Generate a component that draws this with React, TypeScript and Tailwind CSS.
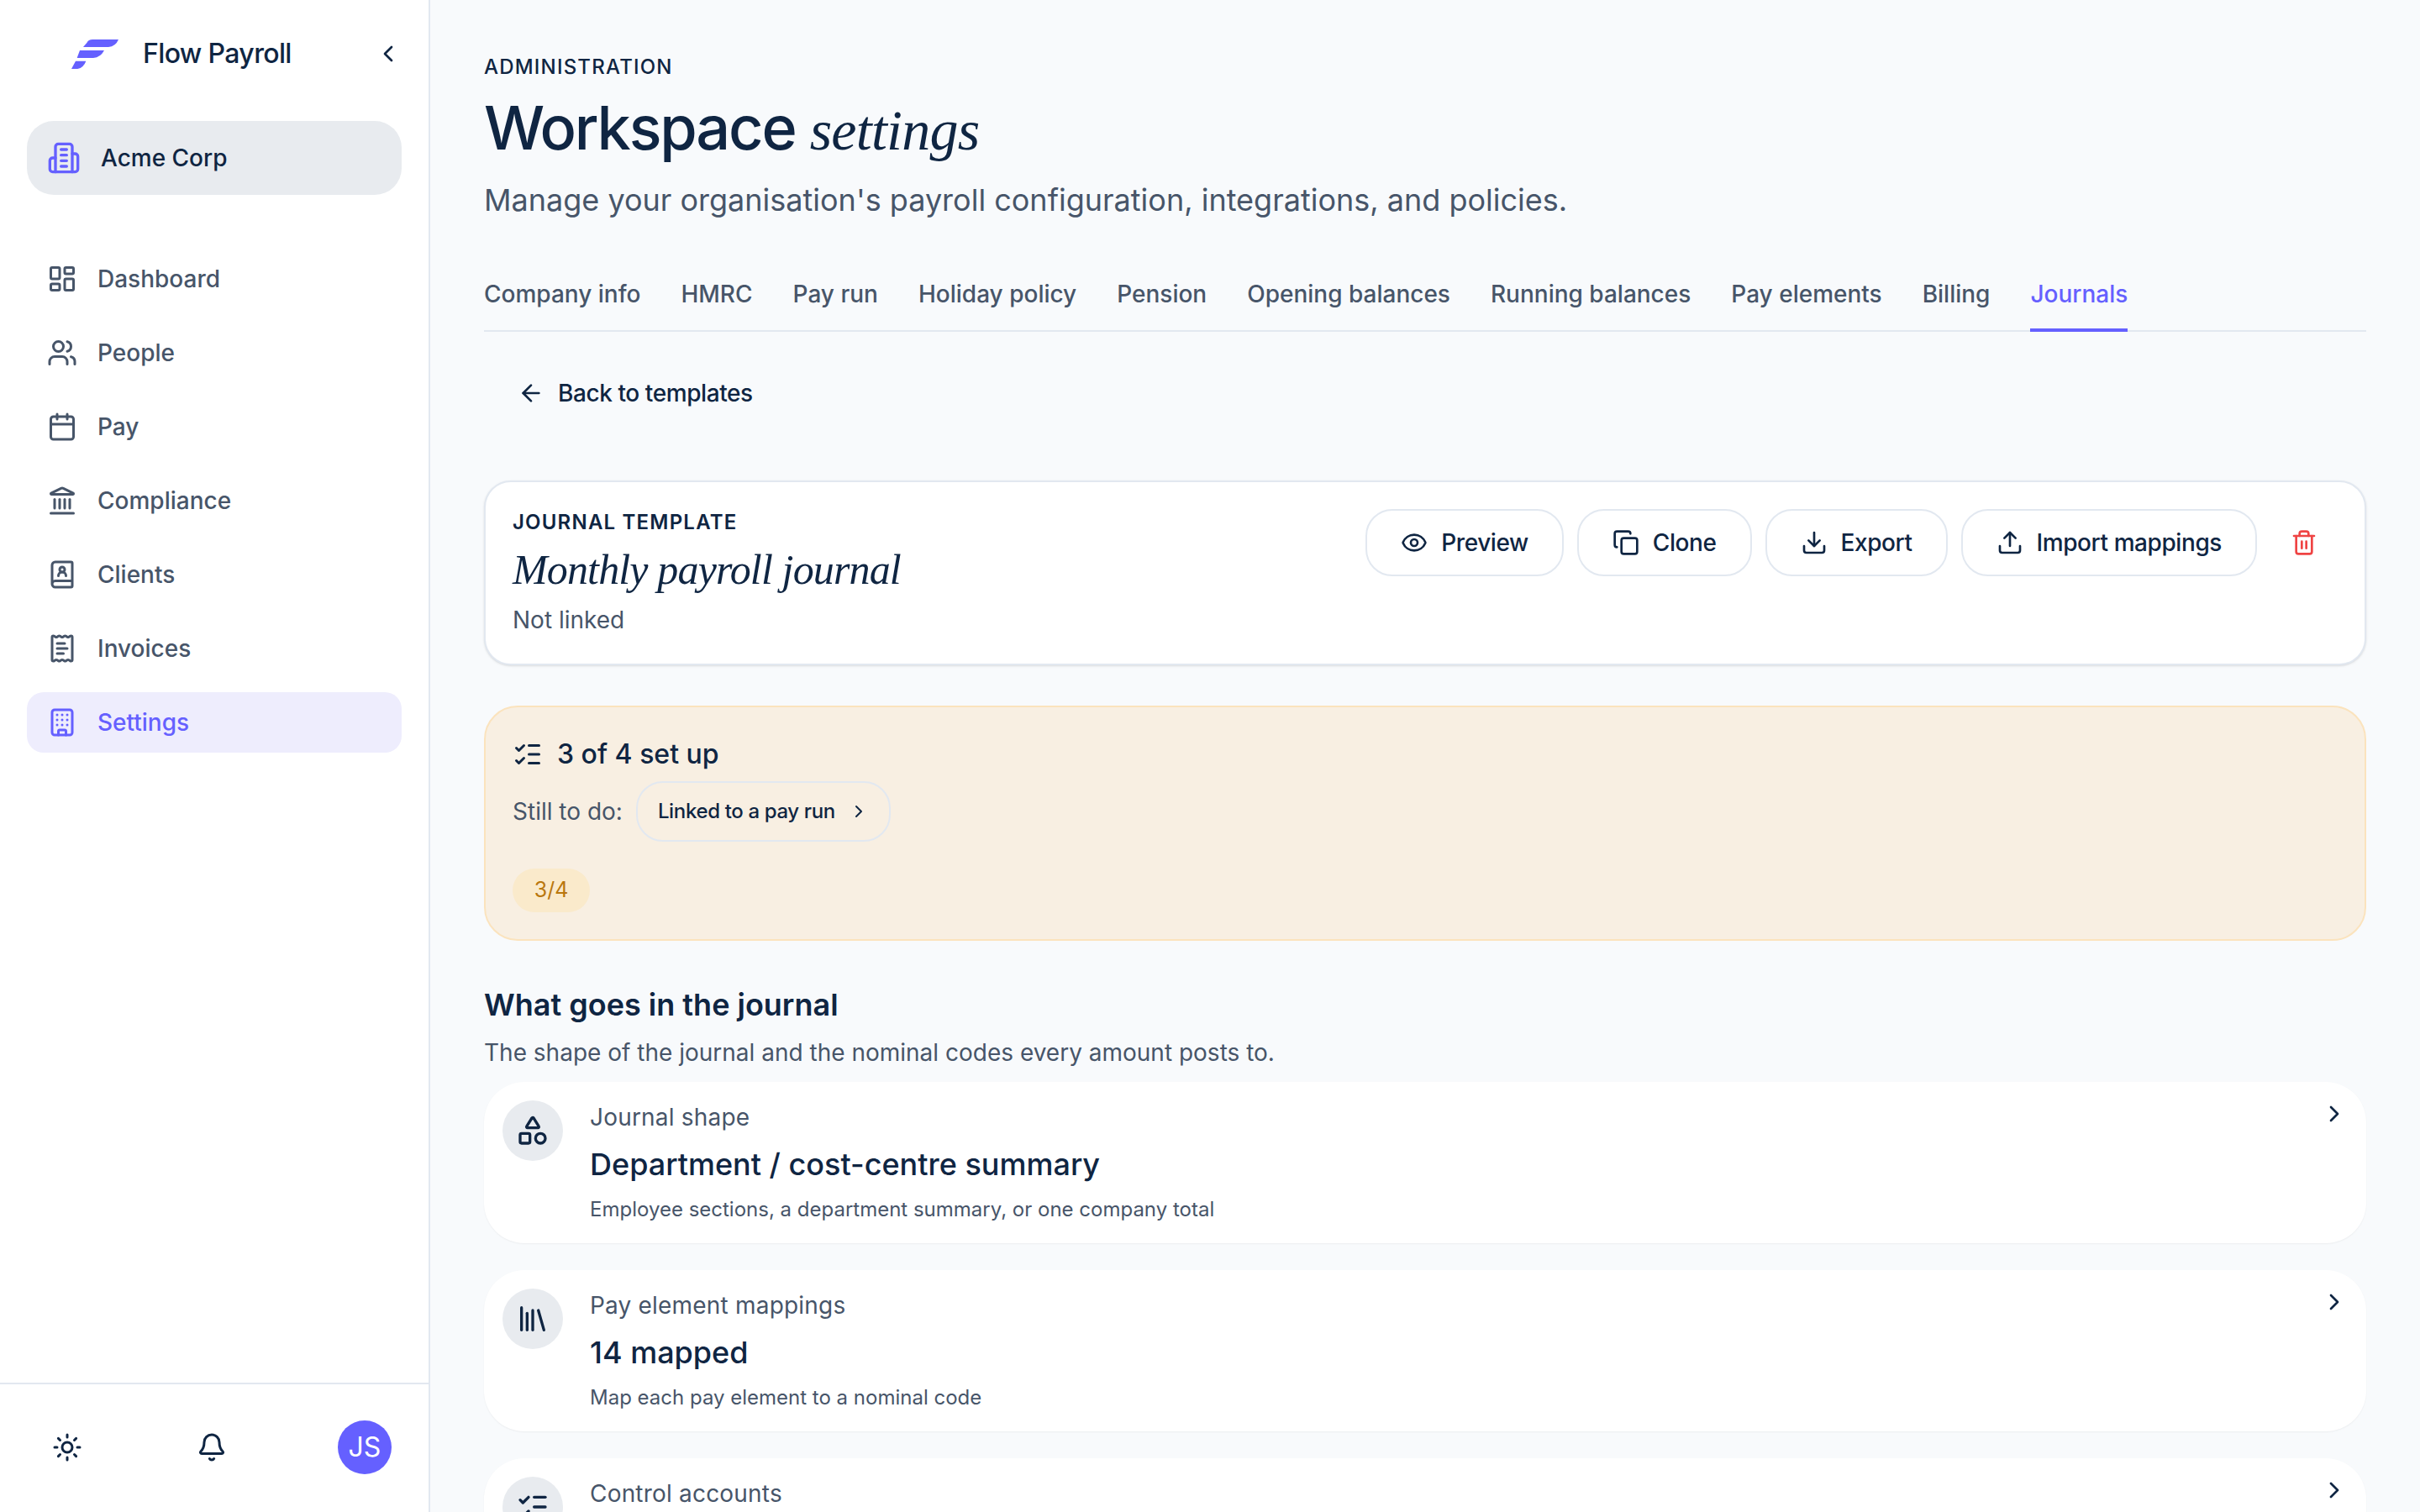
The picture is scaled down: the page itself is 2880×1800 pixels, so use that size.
import React from 'react';
import {
  ArrowLeft,
  Bell,
  BookUser,
  Building,
  Calendar,
  ChevronLeft,
  ChevronRight,
  Copy,
  Download,
  Eye,
  Landmark,
  LayoutDashboard,
  Library,
  ListChecks,
  ReceiptText,
  Shapes,
  Sun,
  Trash2,
  Upload,
  Users,
} from 'lucide-react';

const navItems = [
  { label: 'Dashboard', icon: LayoutDashboard },
  { label: 'People', icon: Users },
  { label: 'Pay', icon: Calendar },
  { label: 'Compliance', icon: Landmark },
  { label: 'Clients', icon: BookUser },
  { label: 'Invoices', icon: ReceiptText },
  { label: 'Settings', icon: Building, active: true },
];

const tabs = [
  'Company info',
  'HMRC',
  'Pay run',
  'Holiday policy',
  'Pension',
  'Opening balances',
  'Running balances',
  'Pay elements',
  'Billing',
  'Journals',
];

const actions = [
  { label: 'Preview', icon: Eye },
  { label: 'Clone', icon: Copy },
  { label: 'Export', icon: Download },
  { label: 'Import mappings', icon: Upload },
];

// third row runs off the bottom of the page, only its label shows
const rows = [
  {
    icon: Shapes,
    label: 'Journal shape',
    value: 'Department / cost-centre summary',
    desc: 'Employee sections, a department summary, or one company total',
  },
  {
    icon: Library,
    label: 'Pay element mappings',
    value: '14 mapped',
    desc: 'Map each pay element to a nominal code',
  },
  {
    icon: ListChecks,
    label: 'Control accounts',
  },
];

const Logo = () => (
  <svg width="56" height="35" viewBox="0 0 168 105" className="shrink-0 fill-[#6560ff]">
    <path d="M55 12 Q60 0 76 0 H168 Q158 25 132 27 H42 Z" />
    <path d="M30 39 H117 Q104 64 78 66 H20 Z" />
    <path d="M15 77 H52 Q44 100 22 105 H0 Z" />
  </svg>
);

const OrgIcon = () => (
  <svg
    viewBox="0 0 24 24"
    fill="none"
    stroke="currentColor"
    strokeWidth="2"
    strokeLinecap="round"
    strokeLinejoin="round"
    className="size-10 text-[#6560ff]"
  >
    <path d="M6 22V4a2 2 0 0 1 2-2h8a2 2 0 0 1 2 2v18Z" />
    <path d="M6 12H4a2 2 0 0 0-2 2v6a2 2 0 0 0 2 2h2" />
    <path d="M18 9h2a2 2 0 0 1 2 2v9a2 2 0 0 1-2 2h-2" />
    <path d="M10 6h4M10 10h4M10 14h4M10 18h4" />
  </svg>
);

const Sidebar = () => (
  <aside className="flex h-[1800px] w-[512px] shrink-0 flex-col border-r-2 border-[#e2e8f0] bg-white">
    <div className="flex h-[128px] items-center pl-[85px] pr-[32px]">
      <Logo />
      <span className="ml-[29px] text-[32px] font-medium tracking-[-0.02em] text-[#0f2542]">Flow Payroll</span>
      <ChevronLeft className="ml-auto size-8 text-[#0f2542]" />
    </div>
    <div className="mx-8 mt-4 flex h-[88px] items-center gap-6 rounded-[32px] bg-[#e8ebef] pl-6">
      <OrgIcon />
      <span className="text-[28px] font-medium text-[#0f2542]">Acme Corp</span>
    </div>
    <nav className="mx-8 mt-16 flex flex-col gap-4">
      {navItems.map(({ label, icon: Icon, active }) => (
        <div
          key={label}
          className={
            active
              ? 'flex h-[72px] items-center gap-6 rounded-[20px] bg-[#eeedfd] pl-6 text-[#6560ff]'
              : 'flex h-[72px] items-center gap-6 rounded-[20px] pl-6 text-[#475569]'
          }
        >
          <Icon className="size-9" />
          <span className="text-[28px] font-medium">{label}</span>
        </div>
      ))}
    </nav>
    <div className="mt-auto flex h-[154px] items-center border-t-2 border-[#e2e8f0] pb-[2px] pl-[62px] pr-[44px] text-[#0f2542]">
      <Sun className="size-9" />
      <Bell className="ml-[136px] size-9" />
      <div className="ml-auto flex size-16 items-center justify-center rounded-full bg-[#6560ff] text-[32px] text-white">
        JS
      </div>
    </div>
  </aside>
);

const JournalCard = () => (
  <section className="mt-20 flex h-[220px] items-start justify-between rounded-[32px] border-2 border-[#e2e8f0] bg-white p-8 shadow-sm">
    <div>
      <div className="text-[24px] leading-8 font-semibold tracking-[0.05em] text-[#0f2542] uppercase">
        Journal template
      </div>
      <div className="mt-[14px] font-['Liberation_Serif',serif] text-[50px] leading-[52px] tracking-[-0.017em] text-[#0f2542] italic">
        Monthly payroll journal
      </div>
      <div className="mt-[14px] text-[28px] leading-10 text-[#475569]">Not linked</div>
    </div>
    <div className="flex items-center gap-4">
      {actions.map(({ label, icon: Icon }) => (
        <button
          key={label}
          className="flex h-20 items-center gap-4 rounded-[32px] border-2 border-[#e2e8f0] bg-white px-10 text-[28px] font-medium tracking-[-0.015em] text-[#0f2542]"
        >
          <Icon className="size-8" />
          {label}
        </button>
      ))}
      <button className="flex size-20 items-center justify-center text-[#ef4444]">
        <Trash2 className="size-8" />
      </button>
    </div>
  </section>
);

const SetupBanner = () => (
  <section className="mt-12 h-[280px] rounded-[40px] border-2 border-[#fbe3bd] bg-[#f8efe2] pl-8 pt-[34px]">
    <div className="flex h-[44px] items-center gap-[17px] text-[#0f2542]">
      <ListChecks className="size-9" />
      <span className="text-[32px] font-medium">3 of 4 set up</span>
    </div>
    <div className="mt-[10px] flex items-center gap-4">
      <span className="text-[28px] text-[#475569]">Still to do:</span>
      <button className="flex h-[72px] items-center gap-4 rounded-[32px] border-2 border-[#e2e8f0] px-6 text-[24px] font-medium tracking-[-0.015em] text-[#0f2542]">
        Linked to a pay run
        <ChevronRight className="size-6" />
      </button>
    </div>
    <div className="mt-8 flex h-[52px] w-[92px] items-center justify-center rounded-full bg-[#faeacb] text-[25px] text-[#b9770e]">
      3/4
    </div>
  </section>
);

type Row = { icon: typeof Shapes; label: string; value?: string; desc?: string };

const SettingRow = ({ row }: { row: Row }) => {
  const Icon = row.icon;
  return (
    <div className="flex h-[192px] shrink-0 gap-8 rounded-[48px] bg-white p-[22px] shadow-xs">
      <div className="flex size-[72px] shrink-0 items-center justify-center rounded-full bg-[#e8ebef] text-[#0f2542]">
        <Icon className="size-10" />
      </div>
      <div className="min-w-0 flex-1">
        <div className="text-[28px] leading-10 tracking-[0.007em] text-[#475569]">{row.label}</div>
        {row.value && <div className="mt-2 text-[36px] leading-14 font-medium text-[#0f2542]">{row.value}</div>}
        {row.desc && <div className="mt-2 text-[24px] leading-9 text-[#475569]">{row.desc}</div>}
      </div>
      <ChevronRight className="size-8 shrink-0 text-[#0f2542]" />
    </div>
  );
};

export default function App() {
  return (
    <div className="flex h-[1800px] w-[2880px] overflow-hidden bg-[#f8fafc] font-['Inter',sans-serif]">
      <Sidebar />
      <main className="min-w-0 flex-1 px-16 pt-[64px]">
        <div className="text-[24px] leading-8 font-medium tracking-[0.05em] text-[#0f2542] uppercase">
          Administration
        </div>
        <h1 className="mt-[16px] text-[72px] leading-20 font-medium tracking-[-0.03em] text-[#0f2542]">
          Workspace{' '}
          <span className="font-['Liberation_Serif',serif] text-[68px] font-normal tracking-[-0.011em] italic">
            settings
          </span>
        </h1>
        <p className="mt-[19px] text-[36px] leading-12 text-[#475569]">
          Manage your organisation's payroll configuration, integrations, and policies.
        </p>

        <div className="mt-[68px] flex gap-12 border-b-2 border-[#e2e8f0]">
          {tabs.map((tab) => (
            <div
              key={tab}
              className={
                tab === 'Journals'
                  ? '-mb-[2px] border-b-4 border-[#6560ff] pb-[21px] text-[28px] leading-10 font-medium text-[#6560ff]'
                  : '-mb-[2px] border-b-4 border-transparent pb-[21px] text-[28px] leading-10 font-medium text-[#475569]'
              }
            >
              {tab}
            </div>
          ))}
        </div>

        <div className="mt-[49px] flex h-12 items-center gap-4 pl-10 text-[28px] font-medium tracking-[-0.015em] text-[#0f2542]">
          <ArrowLeft className="size-8" />
          Back to templates
        </div>

        <JournalCard />
        <SetupBanner />

        <h2 className="mt-12 text-[36px] leading-14 font-semibold text-[#0f2542]">What goes in the journal</h2>
        <p className="mt-[9px] text-[28px] leading-10 text-[#475569]">
          The shape of the journal and the nominal codes every amount posts to.
        </p>
        <div className="mt-[15px] flex flex-col gap-8">
          {rows.map((row) => (
            <SettingRow key={row.label} row={row} />
          ))}
        </div>
      </main>
    </div>
  );
}
